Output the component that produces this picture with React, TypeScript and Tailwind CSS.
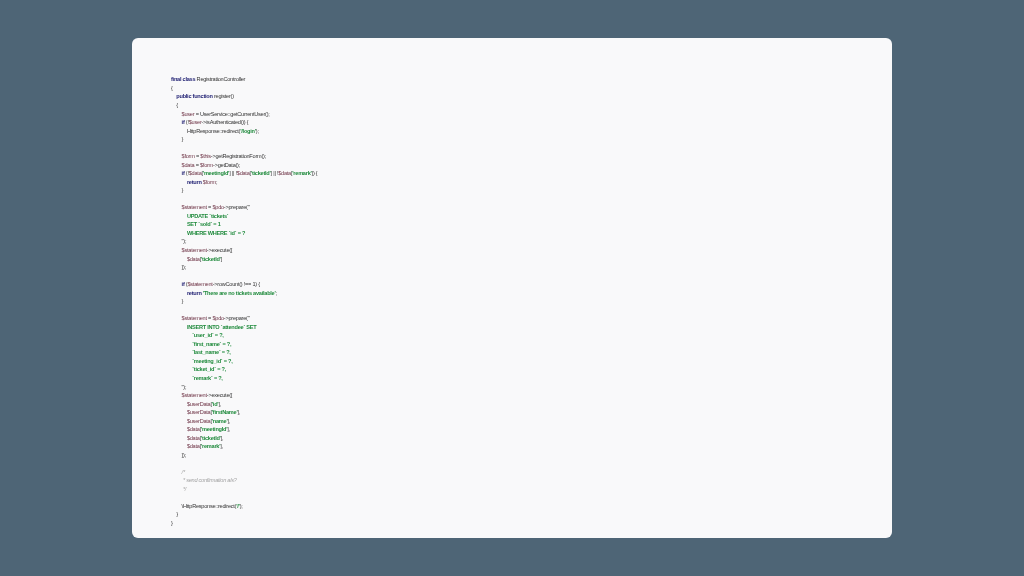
type Kind = "k" | "v" | "s" | "c" | "p";
type Seg = [Kind, string];
type Line = { indent: number; segs: Seg[] };

const kindClass: Record<Kind, string> = {
  k: "font-bold text-[#1c1c70]",
  v: "text-[#6f3547]",
  s: "font-bold text-[#1f8a3c]",
  c: "italic text-[#a3a3a3]",
  p: "text-[#333333]",
};

const l = (indent: number, ...segs: Seg[]): Line => ({ indent, segs });

const code: Line[] = [
  l(0, ["k", "final class "], ["p", "RegistrationController"]),
  l(0, ["p", "{"]),
  l(1, ["k", "public function "], ["p", "register()"]),
  l(1, ["p", "{"]),
  l(2, ["v", "$user"], ["p", " = UserService::getCurrentUser();"]),
  l(2, ["k", "if "], ["p", "(!"], ["v", "$user"], ["p", "->isAuthenticated()) {"]),
  l(3, ["p", "HttpResponse::redirect("], ["s", "'/login'"], ["p", ");"]),
  l(2, ["p", "}"]),
  l(0),
  l(2, ["v", "$form"], ["p", " = "], ["v", "$this"], ["p", "->getRegistrationForm();"]),
  l(2, ["v", "$data"], ["p", " = "], ["v", "$form"], ["p", "->getData();"]),
  l(2, ["k", "if "], ["p", "(!"], ["v", "$data"], ["p", "["], ["s", "'meetingId'"], ["p", "] || !"], ["v", "$data"], ["p", "["], ["s", "'ticketId'"], ["p", "] || !"], ["v", "$data"], ["p", "["], ["s", "'remark'"], ["p", "]) {"]),
  l(3, ["k", "return "], ["v", "$form"], ["p", ";"]),
  l(2, ["p", "}"]),
  l(0),
  l(2, ["v", "$statement"], ["p", " = "], ["v", "$pdo"], ["p", "->prepare(\""]),
  l(3, ["s", "UPDATE `tickets`"]),
  l(3, ["s", "SET `sold` = 1"]),
  l(3, ["s", "WHERE WHERE `id` = ?"]),
  l(2, ["p", "\");"]),
  l(2, ["v", "$statement"], ["p", "->execute(["]),
  l(3, ["v", "$data"], ["p", "["], ["s", "'ticketId'"], ["p", "]"]),
  l(2, ["p", "]);"]),
  l(0),
  l(2, ["k", "if "], ["p", "("], ["v", "$statement"], ["p", "->rowCount() !== 1) {"]),
  l(3, ["k", "return "], ["s", "'There are no tickets available'"], ["p", ";"]),
  l(2, ["p", "}"]),
  l(0),
  l(2, ["v", "$statement"], ["p", " = "], ["v", "$pdo"], ["p", "->prepare(\""]),
  l(3, ["s", "INSERT INTO `attendee` SET"]),
  l(4, ["s", "`user_id` = ?,"]),
  l(4, ["s", "`first_name` = ?,"]),
  l(4, ["s", "`last_name` = ?,"]),
  l(4, ["s", "`meeting_id` = ?,"]),
  l(4, ["s", "`ticket_id` = ?,"]),
  l(4, ["s", "`remark` = ?,"]),
  l(2, ["p", "\");"]),
  l(2, ["v", "$statement"], ["p", "->execute(["]),
  l(3, ["v", "$userData"], ["p", "["], ["s", "'id'"], ["p", "],"]),
  l(3, ["v", "$userData"], ["p", "["], ["s", "'firstName'"], ["p", "],"]),
  l(3, ["v", "$userData"], ["p", "["], ["s", "'name'"], ["p", "],"]),
  l(3, ["v", "$data"], ["p", "["], ["s", "'meetingId'"], ["p", "],"]),
  l(3, ["v", "$data"], ["p", "["], ["s", "'ticketId'"], ["p", "],"]),
  l(3, ["v", "$data"], ["p", "["], ["s", "'remark'"], ["p", "],"]),
  l(2, ["p", "]);"]),
  l(0),
  l(2, ["c", "/*"]),
  l(2, ["c", " * send confirmation als?"]),
  l(2, ["c", " */"]),
  l(0),
  l(2, ["p", "\\HttpResponse::redirect("], ["s", "'/'"], ["p", ");"]),
  l(1, ["p", "}"]),
  l(0, ["p", "}"]),
];

export default function App() {
  return (
    <div className="flex h-[576px] w-[1024px] items-center justify-center overflow-hidden bg-[#4e6576]">
      <div className="h-[500px] w-[760px] rounded-md bg-[#f9f9fa] pl-[39px] pt-[37.4px] font-['Liberation_Sans',sans-serif] text-[5.6px] leading-[8.54px] tracking-[-0.25px] blur-[0.3px]">
        {code.map((line, i) => (
          <div key={i} className="h-[8.54px] whitespace-pre" style={{ paddingLeft: line.indent * 5.3 }}>
            {line.segs.map(([kind, text], j) => (
              <span key={j} className={kindClass[kind]}>
                {text}
              </span>
            ))}
          </div>
        ))}
      </div>
    </div>
  );
}
